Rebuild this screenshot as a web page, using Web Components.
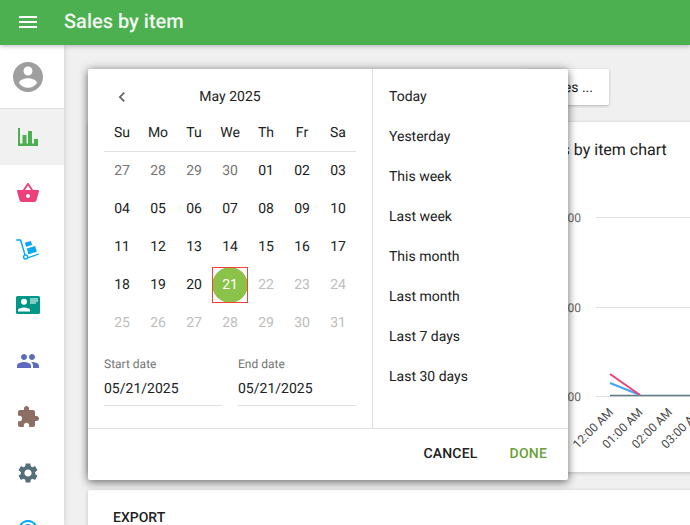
<!DOCTYPE html>
<html>
<head>
<meta charset="utf-8">
<title>Sales by item</title>
<style>
    html, body {
        margin: 0;
        height: 100%;
        overflow: hidden;
        font-family: Roboto, "Liberation Sans", sans-serif;
        text-rendering: geometricPrecision;
    }
</style>
</head>
<body>
<app-shell>
    <top-bar slot="top" title-text="Sales by item"></top-bar>
    <side-nav slot="side">
        <nav-item active><svg viewBox="0 0 24 24" fill="#4caf50"><path d="M2 3h2v15.5h2.5V10h4v8.5H12V6h4v12.5h2V14h4v7H2z"/></svg></nav-item>
        <nav-item><svg viewBox="0 0 24 24" fill="#ec407a"><path d="M17.21 9l-4.38-6.56c-.19-.28-.51-.42-.83-.42-.32 0-.64.14-.83.43L6.79 9H2c-.55 0-1 .45-1 1 0 .09.01.18.04.27l2.54 9.27c.23.84 1 1.46 1.92 1.46h13c.92 0 1.69-.62 1.93-1.46l2.54-9.27L23 10c0-.55-.45-1-1-1h-4.79zM9 9l3-4.4L15 9H9zm3 8c-1.1 0-2-.9-2-2s.9-2 2-2 2 .9 2 2-.9 2-2 2z"/></svg></nav-item>
        <nav-item><svg viewBox="0 0 24 24" fill="#03a9f4"><path d="M.3 2.3h4.9l4.5 15.6-1.3.4L4 3.8H.3z"/><path d="M11.5 20.2l11.2-3.8.4 1.2-11.2 3.8z"/><path d="M8.9 5.8l6-1.7 1.2 4-6 1.7z"/><path d="M10.9 11.4l8.3-2.3 1.6 5.7-8.4 2.4z"/><circle cx="9.6" cy="20" r="2" fill="none" stroke="#03a9f4" stroke-width="1.4"/></svg></nav-item>
        <nav-item><svg viewBox="0 0 24 24"><rect x="0" y="3" width="24" height="18" rx="1.5" fill="#009688"/><circle cx="8" cy="8.8" r="3" fill="#fff"/><path d="M2 18.5v-1.4c0-1.7 3.6-2.7 6-2.7s6 1 6 2.7v1.4z" fill="#fff"/><path d="M14 5.5h8v1h-8zM14 7.5h8v1h-8zM14 9.5h6v1h-6z" fill="#fff"/></svg></nav-item>
        <nav-item><svg viewBox="0 0 24 24" fill="#5c6bc0"><path d="M16 11c1.66 0 2.99-1.34 2.99-3S17.66 5 16 5c-1.66 0-3 1.34-3 3s1.34 3 3 3zm-8 0c1.66 0 2.99-1.34 2.99-3S9.66 5 8 5C6.34 5 5 6.34 5 8s1.34 3 3 3zm0 2c-2.33 0-7 1.17-7 3.5V19h14v-2.5c0-2.33-4.67-3.5-7-3.5zm8 0c-.29 0-.62.02-.97.05 1.16.84 1.97 1.97 1.97 3.45V19h6v-2.5c0-2.33-4.67-3.5-7-3.5z"/></svg></nav-item>
        <nav-item><svg viewBox="0 0 24 24" fill="#8d6e63"><path d="M20.5 11H19V7c0-1.1-.9-2-2-2h-4V3.5C13 2.12 11.88 1 10.5 1S8 2.12 8 3.5V5H4c-1.1 0-1.99.9-1.99 2v3.8H3.5c1.49 0 2.7 1.21 2.7 2.7s-1.21 2.7-2.7 2.7H2V20c0 1.1.9 2 2 2h3.8v-1.5c0-1.49 1.21-2.7 2.7-2.7 1.49 0 2.7 1.21 2.7 2.7V22H17c1.1 0 2-.9 2-2v-4h1.5c1.38 0 2.5-1.12 2.5-2.5S21.88 11 20.5 11z"/></svg></nav-item>
        <nav-item><svg viewBox="0 0 24 24" fill="#546e7a"><path d="M19.14 12.94c.04-.3.06-.61.06-.94 0-.32-.02-.64-.07-.94l2.03-1.58c.18-.14.23-.41.12-.61l-1.92-3.32c-.12-.22-.37-.29-.59-.22l-2.39.96c-.5-.38-1.03-.7-1.62-.94l-.36-2.54c-.04-.24-.24-.41-.48-.41h-3.84c-.24 0-.43.17-.47.41l-.36 2.54c-.59.24-1.13.57-1.62.94l-2.39-.96c-.22-.08-.47 0-.59.22L2.74 8.87c-.12.21-.08.47.12.61l2.03 1.58c-.05.3-.09.63-.09.94s.02.64.07.94l-2.03 1.58c-.18.14-.23.41-.12.61l1.92 3.32c.12.22.37.29.59.22l2.39-.96c.5.38 1.03.7 1.62.94l.36 2.54c.05.24.24.41.48.41h3.84c.24 0 .44-.17.47-.41l.36-2.54c.59-.24 1.13-.56 1.62-.94l2.39.96c.22.08.47 0 .59-.22l1.92-3.32c.12-.22.07-.47-.12-.61l-2.01-1.58zM12 15.6c-1.98 0-3.6-1.62-3.6-3.6s1.62-3.6 3.6-3.6 3.6 1.62 3.6 3.6-1.62 3.6-3.6 3.6z"/></svg></nav-item>
        <nav-item><svg viewBox="0 0 24 24" fill="#03a9f4"><path d="M12 11c-1.1 0-2 .9-2 2s.9 2 2 2 2-.9 2-2-.9-2-2-2zm6 2c0-3.31-2.69-6-6-6s-6 2.69-6 6c0 2.22 1.21 4.15 3 5.19l1-1.74c-1.19-.7-2-1.97-2-3.45 0-2.21 1.79-4 4-4s4 1.79 4 4c0 1.48-.81 2.75-2 3.45l1 1.74c1.79-1.04 3-2.97 3-5.19zM12 3C6.48 3 2 7.48 2 13c0 3.7 2.01 6.92 4.99 8.65l1-1.73C5.61 18.53 4 15.96 4 13c0-4.42 3.58-8 8-8s8 3.58 8 8c0 2.96-1.61 5.53-4 6.92l1 1.73c2.99-1.73 5-4.95 5-8.65 0-5.52-4.48-10-10-10z"/></svg></nav-item>
    </side-nav>
    <sales-report></sales-report>
    <date-picker slot="overlay"></date-picker>
</app-shell>

<script>
class AppShell extends HTMLElement {
    constructor() {
        super();
        this.attachShadow({ mode: 'open' });
        this.shadowRoot.innerHTML = `
            <style>
                :host {
                    display: grid;
                    grid-template-columns: 64px 1fr;
                    grid-template-rows: 45px 1fr;
                    width: 690px;
                    height: 525px;
                    overflow: hidden;
                    background: #f0f0f0;
                }
                .top { grid-column: 1 / 3; position: relative; z-index: 3; }
                .side { position: relative; z-index: 2; overflow: hidden; box-shadow: 0 0 6px rgba(0,0,0,.16); }
                .main { position: relative; min-width: 0; overflow: hidden; }
            </style>
            <div class="top"><slot name="top"></slot></div>
            <div class="side"><slot name="side"></slot></div>
            <div class="main"><slot></slot><slot name="overlay"></slot></div>
        `;
    }
}

class TopBar extends HTMLElement {
    constructor() {
        super();
        this.attachShadow({ mode: 'open' });
        this.shadowRoot.innerHTML = `
            <style>
                :host {
                    display: flex;
                    align-items: center;
                    height: 45px;
                    background: #4caf50;
                    color: #fff;
                    box-shadow: 0 2px 4px rgba(0,0,0,.2);
                }
                .menu { width: 56px; height: 43px; padding-right: 8px; display: flex; align-items: center; justify-content: center; margin-top: -2px; }
                svg { width: 24px; height: 24px; fill: #fff; }
                h1 { margin: -3px 0 0; font: 500 20px/24px Roboto, sans-serif; color: #f1f8f1; }
            </style>
            <div class="menu"><svg viewBox="0 0 24 24"><path d="M3 18h18v-2H3v2zm0-5h18v-2H3v2zm0-7v2h18V6H3z"/></svg></div>
            <h1></h1>
        `;
        this.shadowRoot.querySelector('h1').textContent = this.getAttribute('title-text');
    }
}

class SideNav extends HTMLElement {
    constructor() {
        super();
        this.attachShadow({ mode: 'open' });
        this.shadowRoot.innerHTML = `
            <style>
                :host { display: block; height: 100%; background: #fff; }
                .avatar {
                    height: 63px;
                    padding-right: 8px;
                    display: flex;
                    align-items: center;
                    justify-content: center;
                    border-bottom: 1px solid #e0e0e0;
                }
                .avatar svg { width: 36px; height: 36px; fill: #9e9e9e; }
            </style>
            <div class="avatar"><svg viewBox="0 0 24 24"><path d="M12 2C6.48 2 2 6.48 2 12s4.48 10 10 10 10-4.48 10-10S17.52 2 12 2zm0 3c1.66 0 3 1.34 3 3s-1.34 3-3 3-3-1.34-3-3 1.34-3 3-3zm0 14.2c-2.5 0-4.71-1.28-6-3.22.03-1.99 4-3.08 6-3.08 1.99 0 5.97 1.09 6 3.08-1.29 1.94-3.5 3.22-6 3.22z"/></svg></div>
            <slot></slot>
        `;
    }
}

class NavItem extends HTMLElement {
    constructor() {
        super();
        this.attachShadow({ mode: 'open' });
        this.shadowRoot.innerHTML = `
            <style>
                :host {
                    display: flex;
                    align-items: center;
                    justify-content: center;
                    height: 56px;
                    padding-right: 8px;
                }
                :host([active]) { background: #f1f1f1; }
                ::slotted(svg) { width: 24px; height: 24px; display: block; }
            </style>
            <slot></slot>
        `;
    }
}

class SalesReport extends HTMLElement {
    constructor() {
        super();
        this.attachShadow({ mode: 'open' });
        this.shadowRoot.innerHTML = `
            <style>
                :host {
                    display: flex;
                    flex-direction: column;
                    width: 640px;
                    padding: 24px 0 0 24px;
                    color: #212121;
                    font-family: Roboto, sans-serif;
                }
                .actions { display: flex; justify-content: flex-end; padding-right: 119px; margin-bottom: 17px; }
                .btn {
                    height: 36px;
                    padding: 0 16px;
                    background: #fff;
                    border-radius: 2px;
                    font-size: 14px;
                    line-height: 38px;
                    box-shadow: 0 1px 3px rgba(0,0,0,.25);
                }
                .card { background: #fff; box-shadow: 0 1px 4px rgba(0,0,0,.2); border-radius: 2px; }
                .chart { height: 350px; margin-bottom: 18px; }
                h2 { margin: 0; padding: 17px 0 0 443px; font: 400 16px/22px Roboto, sans-serif; }
                svg { display: block; width: 640px; height: 311px; font-family: Roboto, sans-serif; font-size: 12px; }
                .export { height: 80px; padding: 18px 25px 0; box-sizing: border-box; font-size: 14px; font-weight: 500; line-height: 20px; }
            </style>
            <div class="actions"><div class="btn">Sales ...</div></div>
            <div class="card chart">
                <h2>Sales by item chart</h2>
                <svg viewBox="0 1 640 311">
                    <g stroke="#e0e0e0"><path d="M508 57.5h132M508 147.5h132M508 236.5h132"/></g>
                    <g fill="#666" text-anchor="end">
                        <text x="493" y="62">300</text>
                        <text x="493" y="152">200</text>
                        <text x="493" y="241">100</text>
                    </g>
                    <path d="M522 235.5h118" stroke="#607d8b" stroke-width="1.5" fill="none"/>
                    <path d="M522 223L552 235" stroke="#42a5f5" stroke-width="2" fill="none"/>
                    <path d="M522 214L552 235" stroke="#ec407a" stroke-width="2" fill="none"/>
                    <g fill="#4a4a4a" text-anchor="end">
                        <text transform="translate(526 253) rotate(-45)">12:00 AM</text>
                        <text transform="translate(555.5 253) rotate(-45)">01:00 AM</text>
                        <text transform="translate(585 253) rotate(-45)">02:00 AM</text>
                        <text transform="translate(614.5 253) rotate(-45)">03:00 AM</text>
                    </g>
                </svg>
            </div>
            <div class="card export">EXPORT</div>
        `;
    }
}

class DatePicker extends HTMLElement {
    constructor() {
        super();
        this.attachShadow({ mode: 'open' });
        const weekdays = ['Su', 'Mo', 'Tu', 'We', 'Th', 'Fr', 'Sa'];
        const presets = ['Today', 'Yesterday', 'This week', 'Last week', 'This month', 'Last month', 'Last 7 days', 'Last 30 days'];
        let cells = '';
        [27, 28, 29, 30].forEach(d => { cells += `<div class="d prev"><span>${d}</span></div>`; });
        for (let d = 1; d <= 31; d++) {
            const label = String(d).padStart(2, '0');
            const cls = d === 21 ? 'sel' : d > 21 ? 'off' : '';
            cells += `<div class="d ${cls}"><span>${label}</span></div>`;
        }
        this.shadowRoot.innerHTML = `
            <style>
                :host {
                    position: absolute;
                    left: 24px;
                    top: 24px;
                    width: 480px;
                    height: 411px;
                    display: flex;
                    flex-direction: column;
                    background: #fff;
                    border-radius: 2px;
                    color: #212121;
                    font: 400 14px/20px Roboto, sans-serif;
                    box-shadow: 0 3px 8px rgba(0,0,0,.35), 0 0 10px rgba(0,0,0,.3);
                }
                .body { display: flex; height: 359px; border-bottom: 1px solid #e0e0e0; }
                .cal { width: 252px; padding: 0 16px; flex: none; }
                .month { height: 52px; padding-top: 2px; display: flex; align-items: center; justify-content: center; position: relative; }
                .month svg { position: absolute; left: 8px; top: 18px; width: 20px; height: 20px; fill: #616161; }
                .week, .grid { display: grid; grid-template-columns: repeat(7, 36px); text-align: center; }
                .week { height: 18px; grid-auto-rows: 18px; line-height: 20px; padding-bottom: 10px; border-bottom: 1px solid #e0e0e0; }
                .d { height: 38px; display: flex; align-items: center; justify-content: center; }
                .d span { width: 36px; height: 36px; line-height: 37px; box-sizing: border-box; }
                .prev { color: #757575; }
                .off { color: #bdbdbd; }
                .sel span {
                    color: #fff;
                    outline: 1px solid #f44336;
                    outline-offset: -1px;
                    background: radial-gradient(circle closest-side, #8bc34a 17.5px, transparent 18px);
                }
                .dates { display: grid; grid-template-columns: 118px 118px; gap: 16px; margin-top: 14px; }
                .dates label { display: block; font-size: 12px; line-height: 16px; color: #757575; }
                .dates div div { margin-top: 7px; padding-bottom: 6px; border-bottom: 1px solid #e0e0e0; }
                .presets { flex: 1; border-left: 1px solid #e0e0e0; padding-top: 8px; }
                .presets div { height: 40px; line-height: 40px; padding-left: 16px; }
                .actions { flex: 1; display: flex; justify-content: flex-end; align-items: center; gap: 32px; padding: 0 21px 1px 0; font-weight: 500; letter-spacing: .2px; }
                .done { color: #689f38; }
            </style>
            <div class="body">
                <div class="cal">
                    <div class="month">
                        <svg viewBox="0 0 24 24"><path d="M15.41 7.41L14 6l-6 6 6 6 1.41-1.41L10.83 12z"/></svg>
                        May 2025
                    </div>
                    <div class="week">${weekdays.map(w => `<div>${w}</div>`).join('')}</div>
                    <div class="grid">${cells}</div>
                    <div class="dates">
                        <div><label>Start date</label><div>05/21/2025</div></div>
                        <div><label>End date</label><div>05/21/2025</div></div>
                    </div>
                </div>
                <div class="presets">${presets.map(p => `<div>${p}</div>`).join('')}</div>
            </div>
            <div class="actions"><span>CANCEL</span><span class="done">DONE</span></div>
        `;
    }
}

customElements.define('app-shell', AppShell);
customElements.define('top-bar', TopBar);
customElements.define('side-nav', SideNav);
customElements.define('nav-item', NavItem);
customElements.define('sales-report', SalesReport);
customElements.define('date-picker', DatePicker);
</script>
</body>
</html>
